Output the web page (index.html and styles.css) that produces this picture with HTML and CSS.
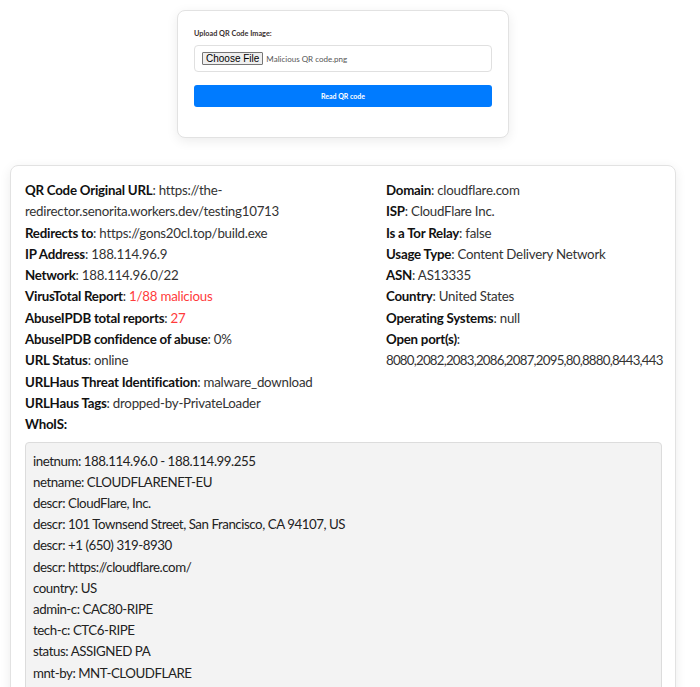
FILE: index.html
```html
<!DOCTYPE html>
<html>
<head>
<meta charset="utf-8">
<link rel="stylesheet" href="styles.css">
</head>
<body>
<div class="page">
  <div class="upload-card">
    <div class="upload-label">Upload QR Code Image:</div>
    <div class="file-box">
      <span class="file-btn">Choose File</span>
      <span class="file-name">Malicious QR code.png</span>
    </div>
    <div class="read-btn">Read QR code</div>
  </div>

  <div class="result-card">
    <div class="cols">
      <div class="col">
        <div class="row"><b>QR Code Original URL</b>: https://the-redirector.senorita.workers.dev/testing10713</div>
        <div class="row"><b>Redirects to</b>: https://gons20cl.top/build.exe</div>
        <div class="row"><b>IP Address</b>: 188.114.96.9</div>
        <div class="row"><b>Network</b>: 188.114.96.0/22</div>
        <div class="row"><b>VirusTotal Report</b>: <span class="red">1/88 malicious</span></div>
        <div class="row"><b>AbuseIPDB total reports</b>: <span class="red">27</span></div>
        <div class="row"><b>AbuseIPDB confidence of abuse</b>: 0%</div>
        <div class="row"><b>URL Status</b>: online</div>
        <div class="row"><b>URLHaus Threat Identification</b>: malware_download</div>
        <div class="row"><b>URLHaus Tags</b>: dropped-by-PrivateLoader</div>
        <div class="row"><b>WhoIS:</b></div>
      </div>
      <div class="col">
        <div class="row"><b>Domain</b>: cloudflare.com</div>
        <div class="row"><b>ISP</b>: CloudFlare Inc.</div>
        <div class="row"><b>Is a Tor Relay</b>: false</div>
        <div class="row"><b>Usage Type</b>: Content Delivery Network</div>
        <div class="row"><b>ASN</b>: AS13335</div>
        <div class="row"><b>Country</b>: United States</div>
        <div class="row"><b>Operating Systems</b>: null</div>
        <div class="row"><b>Open port(s)</b>:</div>
        <div class="row ports">8080,2082,2083,2086,2087,2095,80,8880,8443,443</div>
      </div>
    </div>
    <div class="whois">
      <div>inetnum: 188.114.96.0 - 188.114.99.255</div>
      <div>netname: CLOUDFLARENET-EU</div>
      <div>descr: CloudFlare, Inc.</div>
      <div>descr: 101 Townsend Street, San Francisco, CA 94107, US</div>
      <div>descr: +1 (650) 319-8930</div>
      <div>descr: https://cloudflare.com/</div>
      <div>country: US</div>
      <div>admin-c: CAC80-RIPE</div>
      <div>tech-c: CTC6-RIPE</div>
      <div>status: ASSIGNED PA</div>
      <div>mnt-by: MNT-CLOUDFLARE</div>
      <div>mnt-routes: MNT-CLOUDFLARE</div>
    </div>
  </div>
</div>
</body>
</html>
```
FILE: styles.css
```css
html, body {
  margin: 0;
  padding: 0;
  background: #ffffff;
  overflow: hidden;
}
body {
  font-family: "Lato", "Noto Sans", sans-serif;
  color: #333;
}
.page {
  width: 666px;
  margin-left: 10px;
  padding-top: 10px;
  display: flex;
  flex-direction: column;
  align-items: center;
}
.upload-card {
  width: 298px;
  padding: 18px 16px 30px;
  background: #fff;
  border: 1px solid #e2e2e2;
  border-radius: 8px;
  box-shadow: 0 3px 12px rgba(0,0,0,0.08);
  display: flex;
  flex-direction: column;
}
.upload-label {
  font-size: 7.3px;
  font-weight: bold;
  color: #3a3030;
  line-height: 10px;
  margin-bottom: 6px;
}
.file-box {
  height: 25px;
  border: 1px solid #e0e0e0;
  border-radius: 4px;
  display: flex;
  align-items: center;
  padding-left: 7px;
  gap: 3px;
}
.file-btn {
  font-family: "Liberation Sans", Arial, sans-serif;
  font-size: 10px;
  color: #000;
  background: #efefef;
  border: 1px solid #767676;
  border-radius: 1px;
  padding: 0 3px;
  line-height: 11px;
}
.file-name {
  font-size: 8px;
  color: #555;
}
.read-btn {
  margin-top: 13px;
  height: 22px;
  background: #007bff;
  border-radius: 3px;
  color: #fff;
  font-size: 7px;
  font-weight: bold;
  display: flex;
  align-items: center;
  justify-content: center;
}
.result-card {
  align-self: stretch;
  margin-top: 27px;
  border: 1px solid #e2e2e2;
  border-radius: 8px;
  box-shadow: 0 3px 12px rgba(0,0,0,0.08);
  padding: 14px 13px 14px 14px;
  font-size: 13.3px;
  line-height: 21.3px;
  letter-spacing: -0.24px;
}
.cols {
  display: grid;
  grid-template-columns: 361px 1fr;
}
.col b {
  color: #111;
}
.ports {
  letter-spacing: -0.78px;
  white-space: nowrap;
}
.red {
  color: #ff3b3b;
}
.whois {
  margin-top: 6px;
  background: #f3f3f3;
  border: 1px solid #dcdcdc;
  border-radius: 4px;
  padding: 8px 7px;
  line-height: 21.2px;
  letter-spacing: -0.45px;
  color: #222;
}
```
